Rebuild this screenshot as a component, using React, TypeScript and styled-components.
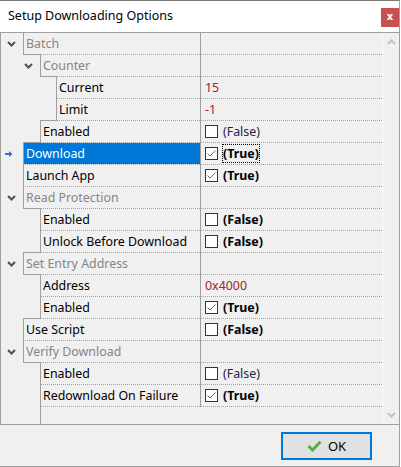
import React from "react";
import styled, { createGlobalStyle } from "styled-components";

const GlobalStyle = createGlobalStyle`
  html, body { margin: 0; padding: 0; background: #ffffff; }
  body { font-family: "Noto Sans", "Liberation Sans", sans-serif; }
  * { box-sizing: border-box; }
`;

type Value =
  | { kind: "text"; text: string }
  | { kind: "check"; checked: boolean; bold: boolean };

type Item = {
  name: string;
  level: number;
  category?: boolean;
  selected?: boolean;
  value?: Value;
};

const ITEMS: Item[] = [
  { name: "Batch", level: 0, category: true },
  { name: "Counter", level: 1, category: true },
  { name: "Current", level: 2, value: { kind: "text", text: "15" } },
  { name: "Limit", level: 2, value: { kind: "text", text: "-1" } },
  { name: "Enabled", level: 1, value: { kind: "check", checked: false, bold: false } },
  { name: "Download", level: 0, selected: true, value: { kind: "check", checked: true, bold: true } },
  { name: "Launch App", level: 0, value: { kind: "check", checked: true, bold: true } },
  { name: "Read Protection", level: 0, category: true },
  { name: "Enabled", level: 1, value: { kind: "check", checked: false, bold: true } },
  { name: "Unlock Before Download", level: 1, value: { kind: "check", checked: false, bold: true } },
  { name: "Set Entry Address", level: 0, category: true },
  { name: "Address", level: 1, value: { kind: "text", text: "0x4000" } },
  { name: "Enabled", level: 1, value: { kind: "check", checked: true, bold: true } },
  { name: "Use Script", level: 0, value: { kind: "check", checked: false, bold: true } },
  { name: "Verify Download", level: 0, category: true },
  { name: "Enabled", level: 1, value: { kind: "check", checked: false, bold: false } },
  { name: "Redownload On Failure", level: 1, value: { kind: "check", checked: true, bold: true } },
];

const INDENT = [23, 40, 56];

const Window = styled.div`
  width: 400px;
  height: 467px;
  display: flex;
  flex-direction: column;
  background: #f0f0f0;
  border-top: 1px solid #7a7a7a;
  border-right: 1px solid #a0a0a0;
  border-bottom: 1px solid #a0a0a0;
`;

const TitleBar = styled.div`
  height: 31px;
  flex: none;
  display: flex;
  align-items: flex-start;
  justify-content: space-between;
  background: #ffffff;
  padding: 0 0 0 8px;
`;

const Title = styled.div`
  font-size: 12.5px;
  line-height: 30px;
  color: #000;
`;

const CloseButton = styled.div`
  margin-top: 7px;
  width: 18px;
  height: 19px;
  background: #c75050;
  color: #fff;
  font-family: "DejaVu Sans", sans-serif;
  font-weight: bold;
  font-size: 10px;
  line-height: 18px;
  text-align: center;
`;

const Grid = styled.div`
  height: 393px;
  flex: none;
  display: flex;
  border-top: 1px solid #a0a0a0;
  border-left: 1px solid #a0a0a0;
  border-bottom: 1px solid #a0a0a0;
`;

const Tree = styled.div`
  width: 381px;
  display: flex;
  flex-direction: column;
`;

const Row = styled.div<{ $stepX: number; $stepW: number }>`
  display: flex;
  height: 22px;
  flex: none;
  background-color: #f0f0f0;
  background-image: linear-gradient(#a0a0a0, #a0a0a0);
  background-repeat: no-repeat;
  background-size: ${(p) => p.$stepW}px 1px;
  background-position: ${(p) => p.$stepX}px 100%;
`;

const NameColumn = styled.div`
  width: 199px;
  display: flex;
`;

const Gutter = styled.div<{ $width: number }>`
  width: ${(p) => p.$width}px;
  flex: none;
  display: flex;
  align-items: center;
`;

const ChevronBox = styled.span<{ $left: number }>`
  display: flex;
  margin-left: ${(p) => p.$left}px;
  margin-bottom: 1px;
`;

const Pointer = styled.span`
  display: flex;
  margin-left: 4px;
  margin-bottom: 1px;
`;

const NameCell = styled.div<{ $selected?: boolean; $category?: boolean }>`
  flex: 1;
  min-width: 0;
  border-left: 1px solid #a0a0a0;
  border-bottom: 1px dotted #a0a0a0;
  padding-left: 2px;
  font-size: 12.4px;
  line-height: 21px;
  white-space: nowrap;
  color: ${(p) => (p.$category ? "#858585" : p.$selected ? "#ffffff" : "#000000")};
  background: ${(p) => (p.$selected ? "#0078d7" : "transparent")};
  background-clip: padding-box;
`;

const ValueCell = styled.div`
  width: 182px;
  flex: none;
  display: flex;
  align-items: center;
  border-left: 1px solid #a0a0a0;
  border-bottom: 1px dotted #a0a0a0;
  padding-left: 4px;
  font-size: 12.4px;
`;

const NumText = styled.span`
  color: #a8201c;
  line-height: 21px;
`;

const CheckBox = styled.span`
  width: 13px;
  height: 13px;
  flex: none;
  display: flex;
  border: 1px solid #333333;
  background: #ffffff;
`;

const Label = styled.span<{ $bold: boolean; $focused?: boolean }>`
  margin-left: 5px;
  line-height: 17px;
  font-weight: ${(p) => (p.$bold ? 700 : 400)};
  color: ${(p) => (p.$bold ? "#000000" : "#24244a")};
  outline: ${(p) => (p.$focused ? "1px dotted #000" : "none")};
`;

const Filler = styled.div`
  flex: 1;
  display: flex;
`;

const FillerCell = styled.div`
  flex: 1;
  border-left: 1px solid #a0a0a0;
`;

const ScrollBar = styled.div`
  width: 17px;
  flex: none;
  display: flex;
  flex-direction: column;
  justify-content: space-between;
  align-items: center;
  padding: 6px 0 6px 0;
  border-left: 1px solid #fafafa;
`;

const ButtonBar = styled.div`
  flex: 1;
  display: flex;
  justify-content: flex-end;
  align-items: flex-start;
  padding: 7px 27px 0 0;
`;

const OkButton = styled.div`
  width: 91px;
  height: 28px;
  display: flex;
  align-items: center;
  justify-content: center;
  gap: 6px;
  border: 2px solid #0078d7;
  background: #e1e1e1;
  font-size: 13px;
  color: #000;
`;

const Chevron = ({ color = "#505050", up = false }: { color?: string; up?: boolean }) => (
  <svg width="9" height="6" viewBox="0 0 9 6">
    <polyline
      points={up ? "1,5 4.5,1.5 8,5" : "1,1 4.5,4.5 8,1"}
      fill="none"
      stroke={color}
      strokeWidth="2"
    />
  </svg>
);

const Arrow = () => (
  <svg width="8" height="6" viewBox="0 0 8 6">
    <path d="M0 2 H4 V0 L7.5 3 L4 6 V4 H0 Z" fill="#3a6fc8" />
  </svg>
);

const CheckMark = () => (
  <svg width="11" height="11" viewBox="0 0 11 11">
    <polyline points="1.5,5.5 4,8 9.5,2.5" fill="none" stroke="#6a6a6a" strokeWidth="1" />
  </svg>
);

const OkIcon = () => (
  <svg width="15" height="12" viewBox="0 0 15 12">
    <polyline points="1.5,6 5.5,10 13.5,1.8" fill="none" stroke="#52b043" strokeWidth="3" />
  </svg>
);

const renderValue = (v: Value | undefined, focused: boolean) => {
  if (!v) return null;
  if (v.kind === "text") return <NumText>{v.text}</NumText>;
  return (
    <>
      <CheckBox>{v.checked && <CheckMark />}</CheckBox>
      <Label $bold={v.bold} $focused={focused}>
        {v.checked ? "(True)" : "(False)"}
      </Label>
    </>
  );
};

export default function App() {
  return (
    <>
      <GlobalStyle />
      <Window>
        <TitleBar>
          <Title>Setup Downloading Options</Title>
          <CloseButton>x</CloseButton>
        </TitleBar>
        <Grid>
          <Tree>
            {ITEMS.map((item, i) => {
              const indent = INDENT[item.level];
              const next = ITEMS[i + 1];
              const nextIndent = next ? INDENT[next.level] : indent;
              const lo = Math.min(indent, nextIndent);
              const hi = Math.max(indent, nextIndent);
              const stepW = lo === hi ? 0 : hi - lo + 1;
              return (
                <Row key={i} $stepX={lo - 1} $stepW={stepW}>
                  <NameColumn>
                    <Gutter $width={indent - 1}>
                      {item.category && (
                        <ChevronBox $left={6 + 17 * item.level}>
                          <Chevron />
                        </ChevronBox>
                      )}
                      {item.selected && (
                        <Pointer>
                          <Arrow />
                        </Pointer>
                      )}
                    </Gutter>
                    <NameCell $selected={item.selected} $category={item.category}>
                      {item.name}
                    </NameCell>
                  </NameColumn>
                  <ValueCell>{renderValue(item.value, !!item.selected)}</ValueCell>
                </Row>
              );
            })}
            <Filler>
              <Gutter $width={39} />
              <FillerCell />
            </Filler>
          </Tree>
          <ScrollBar>
            <Chevron color="#c2c2c2" up />
            <Chevron color="#c2c2c2" />
          </ScrollBar>
        </Grid>
        <ButtonBar>
          <OkButton>
            <OkIcon />
            <span>OK</span>
          </OkButton>
        </ButtonBar>
      </Window>
    </>
  );
}
